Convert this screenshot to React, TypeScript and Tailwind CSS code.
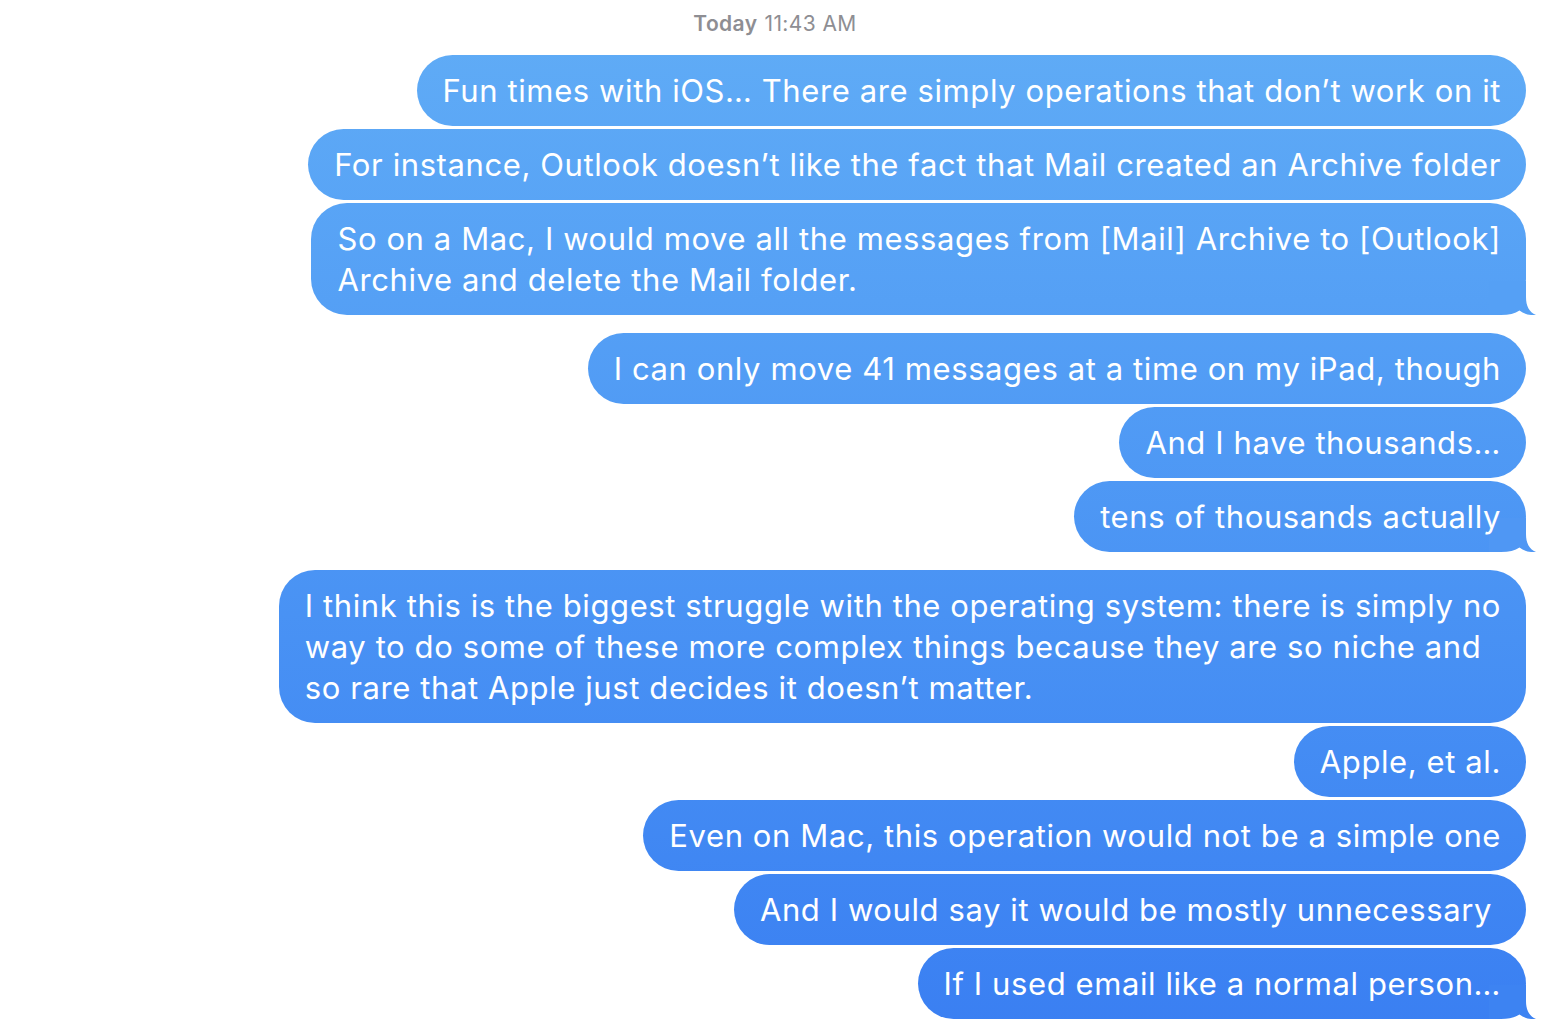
import React from "react";

type Msg = { lines: string[]; tail?: boolean; gapTop: number; tailFill?: string; extraRight?: boolean };

const msgs: Msg[] = [
  { lines: ["Fun times with iOS… There are simply operations that don’t work on it"], gapTop: 0 },
  { lines: ["For instance, Outlook doesn’t like the fact that Mail created an Archive folder"], gapTop: 3 },
  {
    lines: [
      "So on a Mac, I would move all the messages from [Mail] Archive to [Outlook]",
      "Archive and delete the Mail folder.",
    ],
    gapTop: 3,
    tail: true,
    tailFill: "#55a0f5",
  },
  { lines: ["I can only move 41 messages at a time on my iPad, though"], gapTop: 18 },
  { lines: ["And I have thousands…"], gapTop: 3 },
  { lines: ["tens of thousands actually"], gapTop: 3, tail: true, tailFill: "#4f97f4" },
  {
    lines: [
      "I think this is the biggest struggle with the operating system: there is simply no",
      "way to do some of these more complex things because they are so niche and",
      "so rare that Apple just decides it doesn’t matter.",
    ],
    gapTop: 18,
  },
  { lines: ["Apple, et al."], gapTop: 3 },
  { lines: ["Even on Mac, this operation would not be a simple one"], gapTop: 3 },
  { lines: ["And I would say it would be mostly unnecessary"], gapTop: 3, extraRight: true },
  { lines: ["If I used email like a normal person…"], gapTop: 3, tail: true, tailFill: "#3d83f2" },
];

function Tail({ fill }: { fill: string }) {
  return (
    <svg
      className="absolute bottom-0 right-[-10px] pointer-events-none"
      width="47"
      height="34"
      viewBox="0 0 47 34"
    >
      <path
        d="M0 0 L37 0 L37 16 C37 25 40 31 47 34 C41 34.6 35 33 30.5 29.5 C26 32.5 20 34 12 34 L0 34 Z"
        fill={fill}
      />
    </svg>
  );
}

function Bubble({ m }: { m: Msg }) {
  const gapClass =
    m.gapTop === 18 ? "mt-[18px]" : m.gapTop === 3 ? "mt-[3px]" : "mt-0";
  return (
    <div className={`flex justify-end ${gapClass}`}>
      <div
        className={`relative rounded-[36px] bg-linear-to-b from-[#61adf6] to-[#3a7ff2] bg-fixed text-white text-[31px] tracking-[0.6px] leading-[41px] py-[15px] pl-[26px] ${
          m.extraRight ? "pr-[34px]" : "pr-[25px]"
        }`}
      >
        {m.tail && m.tailFill ? <Tail fill={m.tailFill} /> : null}
        <span className="relative">
          {m.lines.map((l, i) => (
            <React.Fragment key={i}>
              {i > 0 ? <br /> : null}
              {l}
            </React.Fragment>
          ))}
        </span>
      </div>
    </div>
  );
}

export default function App() {
  return (
    <div
      className="w-[1566px] h-[1031px] bg-white overflow-hidden"
      style={{ fontFamily: "Inter, 'Noto Sans', 'Liberation Sans', sans-serif" }}
    >
      <div className="h-[47px] flex items-center justify-center pr-[16px] pt-[1px] pb-[1px] text-[21px] tracking-[0.4px] text-[#8e8e93]">
        <span className="font-semibold">Today</span>
        <span className="ml-[7px]">11:43 AM</span>
      </div>
      <div className="pr-[40px] pt-[8px]">
        {msgs.map((m, i) => (
          <Bubble key={i} m={m} />
        ))}
      </div>
    </div>
  );
}
